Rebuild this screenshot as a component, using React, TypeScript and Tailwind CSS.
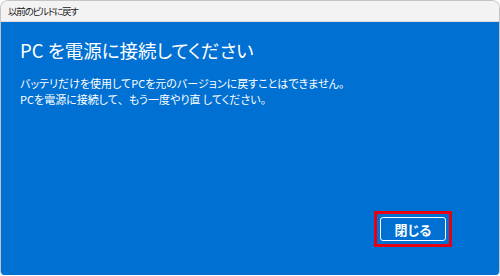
import React from 'react';

const font = "font-['Yu_Gothic_UI','Noto_Sans_CJK_JP',sans-serif] [font-feature-settings:'palt']";

const App: React.FC = () => {
  return (
    <div className={`w-[500px] h-[276px] bg-white ${font}`}>
      <div className="h-[275px] flex flex-col border border-[#c4c4c4] border-b-0 rounded-t-[8px] rounded-b-[4px] overflow-hidden">
        {/* title bar */}
        <div className="h-[21px] shrink-0 bg-[#f3f3f3] flex items-center pl-[7px] pt-[1px] border-b border-[#dcdcdc]">
          <span className="text-[9.5px] leading-none tracking-[-1.2px] text-[#1a1a1a]">以前のビルドに戻す</span>
        </div>

        <div className="flex-1 bg-[#0070d3] text-white flex flex-col pl-[19px] pr-[47px] pt-[16px] pb-[28px]">
          <h1 className="text-[18.5px] leading-[24px] font-normal">PC を電源に接続してください</h1>
          <div className="mt-[13px] text-[11px] leading-[16px]">
            <p>バッテリだけを使用してPCを元のバージョンに戻すことはできません。</p>
            <p>
              PCを電源に接続して<span className="[font-feature-settings:normal]">、</span>もう一度やり直 してください。
            </p>
          </div>

          <div className="mt-auto flex justify-end">
            <div className="border-[3px] border-[#e60012] p-[3px]">
              <button className="w-[66px] h-[24px] rounded-[3px] border border-white text-[13px] font-bold leading-none text-white flex items-center justify-center">
                閉じる
              </button>
            </div>
          </div>
        </div>
      </div>
    </div>
  );
};

export default App;
